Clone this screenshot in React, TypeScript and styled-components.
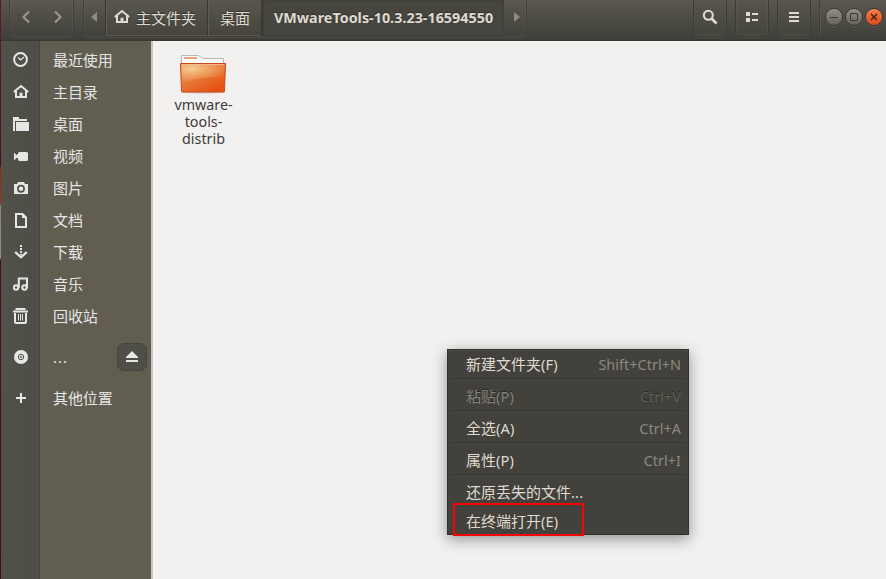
import React from "react";
import styled, { createGlobalStyle, css } from "styled-components";

const Global = createGlobalStyle`
  * { box-sizing: border-box; }
  html, body { margin: 0; padding: 0; overflow: hidden; }
  body { font: 14.67px/20px "Noto Sans", "Noto Sans CJK SC", sans-serif; color: #dfdbd2; }
  svg { display: block; flex: none; }
`;

const Screen = styled.div`
  position: relative;
  display: grid;
  grid-template-columns: 1px 1fr;
  width: 886px;
  height: 579px;
  background: #f2f1f0;
`;
const DesktopEdge = styled.div`
  background: linear-gradient(#69142c 0, #5a0f2b 120px, #51092a 165px, #8c2b0d 168px, #a03713 204px, #8c8587 206px, #8f8b90 258px, #500b2b 260px, #46082a 100%);
`;
const Window = styled.div`
  display: flex;
  flex-direction: column;
  min-width: 0;
`;
const Header = styled.header`
  display: flex;
  align-items: flex-start;
  height: 41px;
  padding-left: 8px;
  background: linear-gradient(#5a584e 0, #4e4d45 17px, #403f3a 38px, #3c3b37 41px);
  border-bottom: 1px solid #393834;
`;
const frame = css`
  height: 37px;
  border: 1px solid #403f39;
  border-top: 0;
  border-radius: 0 0 5px 5px;
  box-shadow: 0 1px 0 rgba(255, 255, 255, 0.07), inset 1px 0 rgba(255, 255, 255, 0.04), inset -1px 0 rgba(255, 255, 255, 0.04), inset 0 -1px rgba(255, 255, 255, 0.04);
`;
const NavGroup = styled.div`
  ${frame}
  display: flex;
  align-items: flex-start;
  justify-content: space-between;
  width: 65px;
  padding: 10px 10px 0 11px;
  margin-right: 9px;
`;
const PathBar = styled.nav`
  ${frame}
  display: flex;
  width: 444px;
  margin-right: 166px;
`;
const PathArrow = styled.div<{ $right?: boolean }>`
  display: flex;
  width: 21px;
  padding: 11px 0 0 ${(p) => (p.$right ? 10 : 7)}px;
`;
const Crumb = styled.div<{ $width: number; $active?: boolean }>`
  display: flex;
  gap: ${(p) => (p.$active ? 0 : 6)}px;
  flex: none;
  width: ${(p) => p.$width}px;
  height: 36px;
  padding: 8px 0 0 ${(p) => (p.$active ? 13 : p.$width > 60 ? 9 : 13)}px;
  color: #dfdbd2;
  font-size: ${(p) => (p.$active ? 14.3 : 15)}px;
  font-weight: ${(p) => (p.$active ? 700 : 400)};
  letter-spacing: ${(p) => (p.$active ? 0.03 : 0)}px;
  white-space: nowrap;
  text-shadow: 0 -1px rgba(0, 0, 0, 0.35);
  background: ${(p) => (p.$active ? "linear-gradient(#46453e, #45443e)" : "linear-gradient(#59574d, #45443d)")};
  box-shadow: ${(p) => (p.$active ? "inset 2px 0 2px #383731, inset -1px 0 #413f39" : "inset 1px 0 #383731, inset 2px 0 #5f5d53, inset 0 -1px #58564d")};
`;
const HomeSlot = styled.span`
  padding-top: 1px;
`;
const ToolButton = styled.div`
  ${frame}
  display: flex;
  justify-content: center;
  width: 34px;
  padding-top: 9px;
  margin-right: 8px;
  background: linear-gradient(#57554b, #45443d);
  border-color: #3b3a35;
`;
const Divider = styled.div`
  width: 2px;
  height: 34px;
  border-left: 1px solid #403f39;
  border-right: 1px solid #58564d;
  margin: 0 4px 0 0;
`;
const WindowControls = styled.div`
  display: flex;
  gap: 2px;
  padding-top: 8px;
`;
const Control = styled.div<{ $close?: boolean }>`
  display: grid;
  place-items: center;
  width: 18px;
  height: 18px;
  border-radius: 50%;
  border: 1px solid #393731;
  background: ${(p) => (p.$close ? "linear-gradient(#f37a51, #de4c19)" : "linear-gradient(#8e8c83, #66655d)")};
  box-shadow: inset 0 1px rgba(255, 255, 255, 0.16), 0 1px rgba(255, 255, 255, 0.1);
`;
const Body = styled.div`
  display: flex;
  flex: 1;
`;
const Sidebar = styled.aside`
  width: 152px;
  padding-top: 3px;
  border-right: 2px solid #cbc5c2;
  background: linear-gradient(90deg, #51514a 0, #4e4e47 38px, #454540 38px, #454540 39px, #615e51 39px);
`;
const Place = styled.div<{ $tall?: boolean }>`
  display: flex;
  align-items: center;
  height: ${(p) => (p.$tall ? 50 : 32)}px;
  color: #e6e6e6;
`;
const PlaceIcon = styled.div`
  display: flex;
  justify-content: center;
  width: 39px;
`;
const PlaceName = styled.span<{ $dots?: boolean }>`
  flex: 1;
  padding-left: 13px;
  font-size: 15px;
  letter-spacing: ${(p) => (p.$dots ? 1 : -0.1)}px;
`;
const Eject = styled.div`
  display: grid;
  place-items: center;
  width: 30px;
  height: 28px;
  margin-right: 4px;
  border: 1px solid #45453d;
  border-radius: 7px;
  background: #504f47;
`;
const Files = styled.main`
  flex: 1;
  padding: 11px 0 0 10px;
  background: #f2f1f0;
`;
const File = styled.div`
  display: flex;
  flex-direction: column;
  align-items: center;
  width: 80px;
`;
const FileName = styled.div`
  margin: 2px 0 0 1px;
  color: #3c3c3c;
  font-size: 14.3px;
  line-height: 17px;
  text-align: center;
`;
const Menu = styled.div`
  position: absolute;
  left: 447px;
  top: 349px;
  width: 242px;
  height: 186px;
  padding: 0 4px;
  border: 1px solid #32312d;
  background: #42413b;
  box-shadow: 0 4px 14px rgba(0, 0, 0, 0.4), inset 0 1px #4b4a43;
`;
const MenuItem = styled.div<{ $disabled?: boolean }>`
  display: flex;
  justify-content: space-between;
  align-items: center;
  height: 29px;
  padding: 0 3px 0 14px;
  white-space: nowrap;
  color: ${(p) => (p.$disabled ? "#85837b" : "#dfdbd2")};
  text-shadow: ${(p) => (p.$disabled ? "0 -1px #282723" : "none")};
  &:first-child { height: 28px; }
`;
const Label = styled.span`
  font-size: 15px;
`;
const Latin = styled.span`
  font-size: 14.6px;
  letter-spacing: 0.15px;
`;
const Shortcut = styled.span<{ $disabled?: boolean }>`
  padding-top: 2px;
  font-size: 14.4px;
  letter-spacing: 0.05px;
  color: ${(p) => (p.$disabled ? "#605f58" : "#8b8982")};
`;
const Rule = styled.div`
  height: 3px;
  border-top: 1px solid #393833;
  border-bottom: 1px solid #494841;
`;
const Highlight = styled.div`
  position: absolute;
  left: 453px;
  top: 503px;
  width: 131px;
  height: 33px;
  border: 2px solid #fb0007;
`;

const Chevron = ({ right }: { right?: boolean }) => (
  <svg width="10" height="14" viewBox="0 0 10 14" fill="none" stroke="#96948b" strokeWidth="2.2">
    <path d={right ? "M2 1.5 7.5 7 2 12.5" : "M8 1.5 2.5 7 8 12.5"} />
  </svg>
);
const HomeIcon = ({ color = "#e6e6e6" }: { color?: string }) => (
  <svg width="16" height="16" viewBox="0 0 16 16" fill="none">
    <path d="M.8 8 8 2.1 15.2 8M3 7v6h10V7" stroke={color} strokeWidth="2" />
    <path d="M6.5 14V8.7h3V14z" fill={color} />
  </svg>
);

const glyphs: Record<string, React.ReactNode> = {
  recent: (
    <g fill="none" stroke="#e6e6e6">
      <circle cx="7.5" cy="7.5" r="6.4" strokeWidth="2" />
      <path d="m5 5.5 2.6 2.4L11 5" strokeWidth="1.3" />
    </g>
  ),
  desktop: (
    <g fill="#e6e6e6">
      <path d="M0 1h6v2h8v2H2v10H0z" />
      <path d="M3 6h13v9H3z" />
    </g>
  ),
  video: <path d="M1 4.500 4 7.500V6h1q0-2 1.500-2h7Q15 4 15 5.500v6q0 1.500-1.500 1.500h-7Q5 13 5 11v-1H4v-.500L1 12.500z" fill="#e6e6e6" />,
  pictures: (
    <g>
      <path d="M1 4h3l1-2h6l1 2h3v10H1z" fill="#e6e6e6" />
      <circle cx="8" cy="8.8" r="3.1" fill="none" stroke="#50504a" strokeWidth="1.7" />
    </g>
  ),
  documents: (
    <g>
      <path d="M3 2h6.500L13 5.500V15H3z" fill="none" stroke="#e6e6e6" strokeWidth="2" />
      <path d="M9 2v4h4z" fill="#e6e6e6" />
    </g>
  ),
  downloads: (
    <g fill="none" stroke="#e6e6e6">
      <path d="M8 1v10" strokeWidth="2" strokeDasharray="2 1" />
      <path d="m2.200 8 5.800 5.300L13.800 8" strokeWidth="2.300" />
    </g>
  ),
  music: (
    <g fill="none" stroke="#e6e6e6" strokeWidth="2">
      <circle cx="3" cy="11.5" r="2.2" />
      <circle cx="11.5" cy="11.5" r="2.2" />
      <path d="M5.800 12V2.500h8.200V12" />
    </g>
  ),
  trash: (
    <g fill="none" stroke="#e6e6e6">
      <path d="M0 3.500h15M3.500 2V1h8v1" strokeWidth="2" />
      <path d="M2 5v9q0 1 1 1h9q1 0 1-1V5" strokeWidth="2" />
      <path d="M5.500 6v6.500M7.500 6v6.500M9.500 6v6.500" strokeWidth="1" />
    </g>
  ),
  disc: (
    <g>
      <circle cx="8" cy="8" r="7" fill="#e6e6e6" />
      <circle cx="8" cy="8" r="2.7" fill="none" stroke="#50504a" />
      <circle cx="8" cy="8" r="1" fill="#50504a" />
    </g>
  ),
  other: <path d="M8 3v10M3 8h10" stroke="#e6e6e6" strokeWidth="2" />,
};

const places: { icon: string; name: string; eject?: boolean }[] = [
  { icon: "recent", name: "最近使用" },
  { icon: "home", name: "主目录" },
  { icon: "desktop", name: "桌面" },
  { icon: "video", name: "视频" },
  { icon: "pictures", name: "图片" },
  { icon: "documents", name: "文档" },
  { icon: "downloads", name: "下载" },
  { icon: "music", name: "音乐" },
  { icon: "trash", name: "回收站" },
  { icon: "disc", name: "...", eject: true },
  { icon: "other", name: "其他位置" },
];

const menu = [
  { label: "新建文件夹", key: "(F)", shortcut: "Shift+Ctrl+N", rule: true },
  { label: "粘贴", key: "(P)", shortcut: "Ctrl+V", rule: true, disabled: true },
  { label: "全选", key: "(A)", shortcut: "Ctrl+A", rule: true },
  { label: "属性", key: "(P)", shortcut: "Ctrl+I", rule: true },
  { label: "还原丢失的文件", key: "..." },
  { label: "在终端打开", key: "(E)" },
];

const Folder = () => (
  <svg width="48" height="42" viewBox="0 0 48 42">
    <defs>
      <linearGradient id="front" x1="0" y1="0" x2="0.7" y2="1">
        <stop offset="0" stopColor="#e39a60" />
        <stop offset="0.5" stopColor="#e57a3c" />
        <stop offset="1" stopColor="#e8500f" />
      </linearGradient>
      <radialGradient id="glow" cx="0.25" cy="0.25" r="0.8">
        <stop offset="0" stopColor="#f7d79f" stopOpacity="0.85" />
        <stop offset="1" stopColor="#f5b568" stopOpacity="0.1" />
      </radialGradient>
    </defs>
    <ellipse cx="24" cy="40.2" rx="22" ry="1.5" fill="#b9b4b0" opacity="0.6" />
    <path d="M2.500 14V3.500h17l4 3h21V14z" fill="#fafafa" stroke="#bbb9b7" />
    <path d="M5 5h13v2H5z" fill="#eaa27b" />
    <path d="M1.500 11.500h45l-1 27.500q0 1-1 1h-41q-1 0-1-1z" fill="url(#front)" stroke="#c74a1b" />
    <path d="M2.500 12.500h43l-.5 11Q20 26 3 30z" fill="url(#glow)" />
    <path d="M2.500 12.500h43" stroke="#f4b58f" />
  </svg>
);

export default function App() {
  return (
    <Screen>
      <Global />
      <DesktopEdge />
      <Window>
        <Header>
          <NavGroup><Chevron /><Chevron right /></NavGroup>
          <PathBar>
            <PathArrow><svg width="6" height="12"><path d="M6 1v10L0 6z" fill="#8d8b82" /></svg></PathArrow>
            <Crumb $width={102}><HomeSlot><HomeIcon color="#dfdbd2" /></HomeSlot><span>主文件夹</span></Crumb>
            <Crumb $width={54}>桌面</Crumb>
            <Crumb $width={243} $active>VMwareTools-10.3.23-16594550</Crumb>
            <PathArrow $right><svg width="6" height="12"><path d="M0 1v10l6-5z" fill="#8d8b82" /></svg></PathArrow>
          </PathBar>
          <ToolButton>
            <svg width="16" height="16" fill="none" stroke="#dfdbd2">
              <circle cx="6.3" cy="6.3" r="4.5" strokeWidth="2.1" />
              <path d="m9.500 9.500 5 5" strokeWidth="2.600" />
            </svg>
          </ToolButton>
          <ToolButton>
            <svg width="14" height="16" fill="#dfdbd2">
              <path d="M1 3h4v4H1zM1 9h4v4H1zM7 4h6v2H7zM7 10h6v2H7z" />
            </svg>
          </ToolButton>
          <ToolButton>
            <svg width="12" height="16" fill="#dfdbd2"><path d="M1 3h10v2H1zM1 7h10v2H1zM1 11h10v2H1z" /></svg>
          </ToolButton>
          <Divider />
          <WindowControls>
            <Control><svg width="10" height="10"><path d="M1 5.500h8" stroke="#3b3a34" /></svg></Control>
            <Control><svg width="10" height="10"><path d="M1.500 1.500h7v7h-7z" fill="none" stroke="#3b3a34" /></svg></Control>
            <Control $close><svg width="10" height="10"><path d="m2 2 6 6M8 2 2 8" stroke="#4b2411" strokeWidth="1.500" /></svg></Control>
          </WindowControls>
        </Header>
        <Body>
          <Sidebar>
            {places.map((p) => (
              <Place key={p.icon} $tall={p.eject}>
                <PlaceIcon>
                  {p.icon === "home" ? <HomeIcon /> : <svg width="16" height="16" viewBox="0 0 16 16">{glyphs[p.icon]}</svg>}
                </PlaceIcon>
                <PlaceName $dots={p.eject}>{p.name}</PlaceName>
                {p.eject && (
                  <Eject><svg width="12" height="12" fill="#e6e6e6"><path d="M6 0l6 6v1H0V6zM0 9h12v2H0z" /></svg></Eject>
                )}
              </Place>
            ))}
          </Sidebar>
          <Files>
            <File>
              <Folder />
              <FileName>vmware-<br />tools-<br />distrib</FileName>
            </File>
          </Files>
        </Body>
      </Window>
      <Menu>
        {menu.map((m) => (
          <React.Fragment key={m.label}>
            <MenuItem $disabled={m.disabled}>
              <Label>{m.label}<Latin>{m.key}</Latin></Label>
              {m.shortcut && <Shortcut $disabled={m.disabled}>{m.shortcut}</Shortcut>}
            </MenuItem>
            {m.rule && <Rule />}
          </React.Fragment>
        ))}
      </Menu>
      <Highlight />
    </Screen>
  );
}
